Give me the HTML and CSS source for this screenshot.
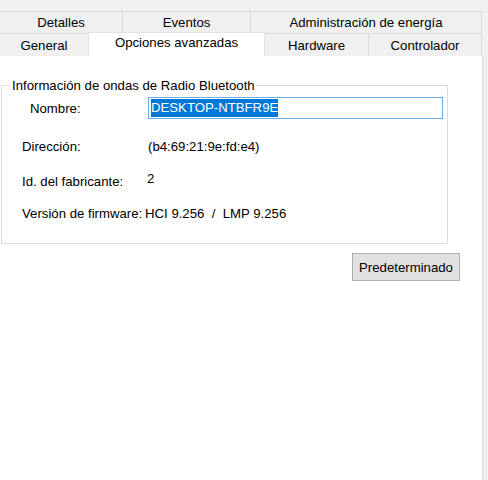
FILE: index.html
```html
<!DOCTYPE html>
<html lang="es">
<head>
<meta charset="utf-8">
<title>Propiedades</title>
<link rel="stylesheet" href="styles.css">
</head>
<body>
<div class="window">
  <div class="tabs">
    <div class="row row-back">
      <div class="tab t-detalles">Detalles</div>
      <div class="tab t-eventos">Eventos</div>
      <div class="tab t-energia">Administración de energía</div>
    </div>
    <div class="row row-front">
      <div class="tab t-general">General</div>
      <div class="tab t-opciones selected">Opciones avanzadas</div>
      <div class="tab t-hardware">Hardware</div>
      <div class="tab t-controlador">Controlador</div>
    </div>
  </div>
  <div class="panel">
    <fieldset class="group">
      <legend>Información de ondas de Radio Bluetooth</legend>
      <div class="field f-nombre">
        <span class="label label-indent">Nombre:</span>
        <div class="textbox"><span class="sel">DESKTOP-NTBFR9E</span></div>
      </div>
      <div class="field f-dir">
        <span class="label">Dirección:</span>
        <span class="value">(b4:69:21:9e:fd:e4)</span>
      </div>
      <div class="field f-id">
        <span class="label">Id. del fabricante:</span>
        <span class="value v-id">2</span>
      </div>
      <div class="field f-ver">
        <span class="label">Versión de firmware:</span>
        <span class="value v-ver">HCI 9.256&nbsp; / &nbsp;LMP 9.256</span>
      </div>
    </fieldset>
    <div class="actions">
      <button class="btn" type="button">Predeterminado</button>
    </div>
  </div>
</div>
</body>
</html>
```

FILE: styles.css
```css
* { box-sizing: border-box; }
html, body {
  margin: 0;
  padding: 0;
  background: #f0f0f0;
  font-family: "Liberation Sans", Arial, sans-serif;
  font-size: 13.2px;
  color: #000;
}
.window {
  width: 488px;
  height: 480px;
  overflow: hidden;
}
.tabs {
  padding-top: 11px;
  width: 482px;
}
.row {
  display: flex;
  height: 22px;
}
.row-front {
  height: 23px;
}
.tab {
  border: 1px solid #d9d9d9;
  border-bottom: none;
  margin-right: -1px;
  background: #f0f0f0;
  text-align: center;
  line-height: 22px;
  white-space: nowrap;
}
.row-front .tab {
  line-height: 23px;
}
.t-detalles { width: 123px; border-left: none; }
.t-eventos { width: 129px; }
.t-energia { width: 232px; }
.t-general { width: 89px; border-left: none; }
.t-opciones { width: 177px; }
.t-hardware { width: 105px; }
.t-controlador { width: 114px; }
.tab.selected {
  background: #fff;
  margin-top: -1px;
  height: 24px;
  line-height: 20px;
  position: relative;
  z-index: 1;
  border-color: #e3e3e3;
}
.panel {
  background: #fff;
  width: 483px;
  height: 425px;
  border-right: 1px solid #dadada;
  padding-top: 22px;
}
.group {
  margin: 0 0 0 1px;
  padding: 4px 0 19px 0;
  width: 447px;
  border: 1px solid #dcdcdc;
  min-width: 0;
}
.group legend {
  margin-left: 9px;
  padding: 0 1px;
  line-height: 15px;
}
.field {
  display: grid;
  grid-template-columns: 146px 1fr;
  align-items: center;
  height: 22px;
}
.f-dir { margin-top: 16px; }
.f-id { margin-top: 13px; }
.f-ver { margin-top: 10px; }
.label {
  padding-left: 20px;
  white-space: nowrap;
}
.label-indent { padding-left: 28px; }
.value { white-space: nowrap; }
.v-id { position: relative; top: -3px; margin-left: -1px; }
.v-ver { margin-left: -3px; }
.textbox {
  width: 295px;
  height: 22px;
  border: 1px solid #6aaee8;
  padding: 1px 2px;
  display: flex;
  align-items: center;
}
.sel {
  background: #0078d7;
  color: #fff;
  line-height: 18px;
  display: inline-block;
}
.actions {
  padding: 9px 0 0 352px;
}
.btn {
  width: 108px;
  height: 28px;
  background: #e1e1e1;
  border: 1px solid #adadad;
  border-radius: 0;
  font-family: "Liberation Sans", Arial, sans-serif;
  font-size: 13.2px;
  color: #000;
  padding: 0;
}
```
